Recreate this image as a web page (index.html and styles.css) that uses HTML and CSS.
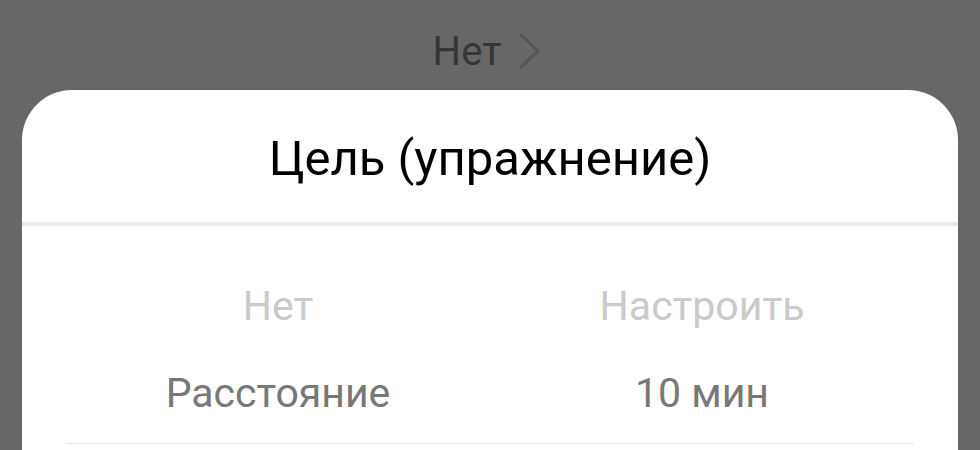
FILE: index.html
```html
<!DOCTYPE html>
<html lang="ru">
<head>
<meta charset="utf-8">
<link rel="stylesheet" href="styles.css">
</head>
<body>
<div class="screen">
  <div class="behind">
    <span class="behind-value">Нет</span>
    <svg class="chevron" width="24" height="36" viewBox="0 0 24 36"><path d="M3 2 L20 18 L3 34" fill="none" stroke="#555" stroke-width="2.8" stroke-linecap="round" stroke-linejoin="round"/></svg>
  </div>
  <div class="sheet">
    <div class="sheet-title">Цель (упражнение)</div>
    <div class="divider"></div>
    <div class="picker">
      <div class="row faded">
        <div class="cell">Нет</div>
        <div class="cell">Настроить</div>
      </div>
      <div class="row selected">
        <div class="cell">Расстояние</div>
        <div class="cell">10 мин</div>
      </div>
    </div>
  </div>
</div>
</body>
</html>
```

FILE: styles.css
```css
html, body {
  margin: 0;
  padding: 0;
  background: #676767;
  font-family: Roboto, "Noto Sans", sans-serif;
}
.screen {
  width: 980px;
  height: 450px;
  overflow: hidden;
  display: flex;
  flex-direction: column;
}
.behind {
  height: 90px;
  padding-top: 34px;
  padding-right: 5px;
  box-sizing: border-box;
  display: flex;
  align-items: flex-start;
  justify-content: center;
  gap: 17px;
}
.behind-value {
  font-size: 40px;
  line-height: 36px;
  color: #363636;
}
.chevron {
  display: block;
  margin-top: -1px;
}
.sheet {
  margin: 0 22px;
  background: #fff;
  border-radius: 50px 50px 0 0;
  flex: 1;
}
.sheet-title {
  height: 132px;
  padding-top: 4px;
  box-sizing: border-box;
  display: flex;
  align-items: center;
  justify-content: center;
  font-size: 49px;
  color: #000;
}
.divider {
  height: 4px;
  background: #e9e9e9;
}
.picker {
  margin: 0 44px;
  padding-top: 37px;
}
.row {
  display: grid;
  grid-template-columns: 1fr 1fr;
  text-align: center;
  font-size: 41px;
}
.row.faded {
  line-height: 86px;
  color: #cacaca;
}
.row.selected {
  line-height: 88px;
  padding-bottom: 6px;
  color: #787878;
  border-bottom: 1px solid #e6e6e6;
}
```
